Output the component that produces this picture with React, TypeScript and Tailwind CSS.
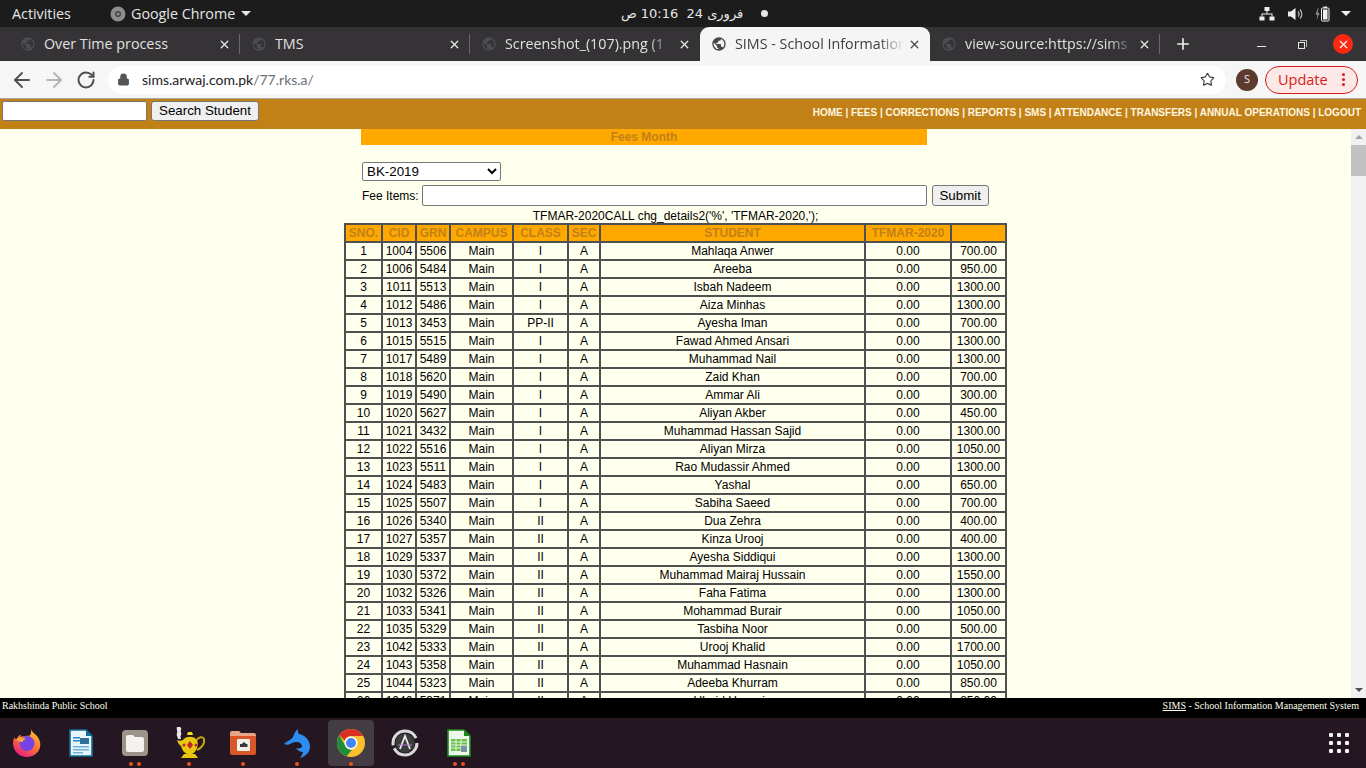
import { ArrowLeft, ArrowRight, RotateCw, Star, Plus, X, Lock } from "lucide-react";
import { MdPublic } from "react-icons/md";

const rows: [number, number, number, string, string, string, string][] = [
  [1, 1004, 5506, "I", "A", "Mahlaqa Anwer", "700.00"],
  [2, 1006, 5484, "I", "A", "Areeba", "950.00"],
  [3, 1011, 5513, "I", "A", "Isbah Nadeem", "1300.00"],
  [4, 1012, 5486, "I", "A", "Aiza Minhas", "1300.00"],
  [5, 1013, 3453, "PP-II", "A", "Ayesha Iman", "700.00"],
  [6, 1015, 5515, "I", "A", "Fawad Ahmed Ansari", "1300.00"],
  [7, 1017, 5489, "I", "A", "Muhammad Nail", "1300.00"],
  [8, 1018, 5620, "I", "A", "Zaid Khan", "700.00"],
  [9, 1019, 5490, "I", "A", "Ammar Ali", "300.00"],
  [10, 1020, 5627, "I", "A", "Aliyan Akber", "450.00"],
  [11, 1021, 3432, "I", "A", "Muhammad Hassan Sajid", "1300.00"],
  [12, 1022, 5516, "I", "A", "Aliyan Mirza", "1050.00"],
  [13, 1023, 5511, "I", "A", "Rao Mudassir Ahmed", "1300.00"],
  [14, 1024, 5483, "I", "A", "Yashal", "650.00"],
  [15, 1025, 5507, "I", "A", "Sabiha Saeed", "700.00"],
  [16, 1026, 5340, "II", "A", "Dua Zehra", "400.00"],
  [17, 1027, 5357, "II", "A", "Kinza Urooj", "400.00"],
  [18, 1029, 5337, "II", "A", "Ayesha Siddiqui", "1300.00"],
  [19, 1030, 5372, "II", "A", "Muhammad Mairaj Hussain", "1550.00"],
  [20, 1032, 5326, "II", "A", "Faha Fatima", "1300.00"],
  [21, 1033, 5341, "II", "A", "Mohammad Burair", "1050.00"],
  [22, 1035, 5329, "II", "A", "Tasbiha Noor", "500.00"],
  [23, 1042, 5333, "II", "A", "Urooj Khalid", "1700.00"],
  [24, 1043, 5358, "II", "A", "Muhammad Hasnain", "1050.00"],
  [25, 1044, 5323, "II", "A", "Adeeba Khurram", "850.00"],
  [26, 1046, 5371, "II", "A", "Ubaid Hussain", "850.00"],
];

const tabs = [
  { title: "Over Time process", fade: false },
  { title: "TMS", fade: false },
  { title: "Screenshot_(107).png (1", fade: true },
  { title: "SIMS - School Information", fade: true, active: true },
  { title: "view-source:https://sims", fade: true },
];

const navLinks = ["HOME", "FEES", "CORRECTIONS", "REPORTS", "SMS", "ATTENDANCE", "TRANSFERS", "ANNUAL OPERATIONS", "LOGOUT"];

const headers = ["SNO.", "CID", "GRN", "CAMPUS", "CLASS", "SEC", "STUDENT", "TFMAR-2020", ""];
const colWidths = ["w-[37px]", "w-[34px]", "w-[34px]", "w-[63px]", "w-[55px]", "w-[32px]", "w-[265px]", "w-[86px]", "w-[55px]"];

function TopBar() {
  return (
    <div className="h-[27px] bg-[#1c1c1c] flex items-center text-[#e6e6e6] text-[14.3px] font-['Open_Sans',sans-serif] shrink-0">
      <span className="ml-3 w-[98px]">Activities</span>
      <svg width="16" height="16" viewBox="0 0 16 16">
        <circle cx="8" cy="8" r="7.5" fill="#8c8c8c" />
        <circle cx="8" cy="8" r="3" fill="#444" />
        <circle cx="8" cy="8" r="1.6" fill="#8c8c8c" />
      </svg>
      <span className="ml-[5px]">Google Chrome</span>
      <span className="ml-[6px] w-0 h-0 border-x-[5px] border-x-transparent border-t-[5px] border-t-[#e6e6e6]" />
      <div className="flex-1 flex justify-center items-center pr-[121px] font-['DejaVu_Sans',sans-serif] text-[13px]">
        <span dir="rtl" className="whitespace-pre">فروری 24  10:16 ص</span>
        <span className="ml-[18px] w-[7px] h-[7px] rounded-full bg-[#e6e6e6]" />
      </div>
      <div className="flex items-center mr-[15px]">
        <svg width="16" height="14" viewBox="0 0 16 14" fill="#eee">
          <rect x="5.5" y="0" width="5" height="4" />
          <rect x="0.5" y="9.5" width="5" height="4" />
          <rect x="10.5" y="9.5" width="5" height="4" />
          <path d="M7.5 4h1v2.5H13.5V9.5h-1V7.5h-9V9.5h-1V6.5H7.5z" />
        </svg>
        <svg className="ml-[13px]" width="16" height="14" viewBox="0 0 16 14" fill="none">
          <path d="M0 4.5h3L7.5 1v12L3 9.500H0z" fill="#eee" />
          <path d="M10 4.500a3.500 3.500 0 0 1 0 5M12 2.500a6.500 6.500 0 0 1 0 9" stroke="#bbb" strokeWidth="1.200" />
        </svg>
        <svg className="ml-[11px]" width="15" height="16" viewBox="0 0 15 16" fill="none">
          <path d="M3 2 0.500 8.500H2.500L1.500 14 4.500 7H2.500L3.500 2z" fill="#999" />
          <rect x="6.500" y="2" width="7.500" height="13" rx="1" stroke="#eee" />
          <rect x="8" y="3.500" width="4.500" height="10" fill="#eee" />
          <rect x="8.500" y="0.500" width="3.500" height="1.500" fill="#eee" />
        </svg>
        <span className="ml-[11px] w-0 h-0 border-x-[5px] border-x-transparent border-t-[5px] border-t-[#eee]" />
      </div>
    </div>
  );
}

function TabStrip() {
  return (
    <div className="h-[34px] bg-[#353336] flex items-stretch pl-[9px] shrink-0 font-['Open_Sans',sans-serif] text-[14.3px]">
      {tabs.map((tab, i) => (
        <div
          key={tab.title}
          className={
            tab.active
              ? "w-[230px] flex items-center bg-[#f5f5f5] rounded-t-[9px] text-[#3c4043] pl-[11px] pr-[9px]"
              : i === 0
                ? "w-[231px] flex items-center text-[#e0e0e0] pl-[11px] pr-[9px] relative"
                : "w-[230px] flex items-center text-[#e0e0e0] pl-[11px] pr-[9px] relative"
          }
        >
          <MdPublic size={16} color={tab.active ? "#45474a" : "#4d4c4f"} className="shrink-0" />
          <span
            className={
              tab.fade
                ? "ml-[8px] flex-1 overflow-hidden whitespace-nowrap [mask-image:linear-gradient(to_right,black_85%,transparent)]"
                : "ml-[8px] flex-1 overflow-hidden whitespace-nowrap"
            }
          >
            {tab.title}
          </span>
          <X size={13} strokeWidth={2.400} color={tab.active ? "#45474a" : "#e8e8e8"} className="shrink-0 ml-[4px]" />
          {!tab.active && i !== 2 && <span className="absolute right-0 top-[7px] h-[20px] w-px bg-[#6a686b]" />}
        </div>
      ))}
      <div className="w-[46px] flex items-center justify-center">
        <Plus size={18} strokeWidth={2.200} color="#eee" />
      </div>
      <div className="flex-1 flex items-center justify-end pr-[13px]">
        <span className="w-[9px] h-px bg-[#e6e6e6] mr-[32px] mt-[5px]" />
        <span className="relative w-[7px] h-[7px] border border-[#e6e6e6] mr-[28px] mt-[2px]">
          <span className="absolute -top-[3px] -right-[3px] w-[7px] h-[7px] border-t border-r border-[#bbb]" />
        </span>
        <span className="w-[20px] h-[20px] rounded-full bg-[#fa2a10] flex items-center justify-center">
          <X size={13} strokeWidth={2} color="#fff" />
        </span>
      </div>
    </div>
  );
}

function Toolbar() {
  return (
    <div className="h-[37px] bg-[#f6f6f6] flex items-center shrink-0 font-['Open_Sans',sans-serif]">
      <div className="w-[108px] flex items-center pl-[10px] gap-[8px]">
        <ArrowLeft size={24} strokeWidth={1.900} color="#505050" />
        <ArrowRight size={24} strokeWidth={1.800} color="#b4b4b4" />
        <RotateCw size={20} strokeWidth={2.400} color="#505050" className="ml-[2px]" />
      </div>
      <div className="w-[1118px] h-[28px] bg-white rounded-full flex items-center pl-[9px] pr-[11px]">
        <Lock size={13} fill="#555" color="#555" strokeWidth={2} />
        <span className="ml-[12px] text-[14px] flex-1 text-[#202124] font-['Lato',sans-serif]">
          sims.arwaj.com.pk<span className="text-[#6a7178]">/77.rks.a/</span>
        </span>
        <Star size={15} strokeWidth={1.900} color="#444" />
      </div>
      <span className="ml-[10px] w-[22px] h-[22px] rounded-full bg-[#5d3a30] text-[#f2e8e4] text-[11px] flex items-center justify-center">
        S
      </span>
      <div className="ml-[7px] w-[93px] h-[28px] rounded-full border border-[#d81a1a] bg-[#fde8e8] text-[#d81a1a] text-[14.500px] flex items-center pl-[12px]">
        Update
        <span className="ml-[14px] flex flex-col gap-[2px]">
          <span className="w-[3px] h-[3px] rounded-full bg-[#d81a1a]" />
          <span className="w-[3px] h-[3px] rounded-full bg-[#d81a1a]" />
          <span className="w-[3px] h-[3px] rounded-full bg-[#d81a1a]" />
        </span>
      </div>
    </div>
  );
}

function PageHeader() {
  return (
    <div className="h-[31px] bg-[#c28117] border-t border-[#a9a9a9] flex items-center pl-[2px] pr-[5px] pb-[6px] shrink-0 font-['Liberation_Sans',sans-serif]">
      <input className="w-[145px] h-[20px] bg-white border border-[#767676] rounded-[2px]" />
      <button className="ml-[4px] w-[108px] h-[20px] bg-[#efefef] border border-[#767676] rounded-[3px] text-[13.333px] text-black leading-none">
        Search Student
      </button>
      <div className="ml-auto mt-[2px] text-[10px] font-bold text-[#fff7e0] whitespace-pre">{navLinks.join(" | ")}</div>
    </div>
  );
}

function FeesTable() {
  return (
    <table className="ml-[344px] w-[661px] table-fixed border-collapse border-2 border-[#505050] text-[12px] text-center text-black">
      <thead>
        <tr className="bg-[#ffa800]">
          {headers.map((h, i) => (
            <th key={i} className={`${colWidths[i]} h-[18px] p-0 border-2 border-[#505050] font-bold text-[#c28117] leading-none`}>
              {h}
            </th>
          ))}
        </tr>
      </thead>
      <tbody>
        {rows.map((r) => (
          <tr key={r[0]}>
            <td className="h-[18px] p-0 border-2 border-[#505050] leading-none">{r[0]}</td>
            <td className="p-0 border-2 border-[#505050] leading-none">{r[1]}</td>
            <td className="p-0 border-2 border-[#505050] leading-none">{r[2]}</td>
            <td className="p-0 border-2 border-[#505050] leading-none">Main</td>
            <td className="p-0 border-2 border-[#505050] leading-none">{r[3]}</td>
            <td className="p-0 border-2 border-[#505050] leading-none">{r[4]}</td>
            <td className="p-0 border-2 border-[#505050] leading-none">{r[5]}</td>
            <td className="p-0 border-2 border-[#505050] leading-none">0.00</td>
            <td className="p-0 border-2 border-[#505050] leading-none">{r[6]}</td>
          </tr>
        ))}
      </tbody>
    </table>
  );
}

function Scrollbar() {
  return (
    <div className="w-[15px] bg-[#f1f1f1] flex flex-col items-center shrink-0">
      <span className="mt-[6px] w-0 h-0 border-x-[4px] border-x-transparent border-b-[4px] border-b-[#a3a3a3]" />
      <span className="mt-[6px] w-full h-[31px] bg-[#c1c1c1]" />
      <span className="mt-auto mb-[6px] w-0 h-0 border-x-[4px] border-x-transparent border-t-[4px] border-t-[#505050]" />
    </div>
  );
}

function Content() {
  return (
    <div className="flex-1 min-h-0 flex bg-[#ffffee] font-['Liberation_Sans',sans-serif]">
      <div className="flex-1 min-w-0 overflow-hidden">
        <div className="ml-[361px] w-[566px] h-[16px] bg-[#ffa800] text-center text-[12px] font-bold text-[#c28117] leading-[16px]">
          Fees Month
        </div>
        <select className="ml-[362px] mt-[17px] block w-[139px] h-[19px] bg-white border border-[#767676] rounded-[2px] text-[13.333px] text-black">
          <option>BK-2019</option>
        </select>
        <div className="ml-[362px] mt-[4px] h-[21px] flex items-center text-[12px] text-black">
          <span>Fee Items:</span>
          <input className="ml-[3px] w-[505px] h-[21px] bg-white border border-[#767676] rounded-[2px]" />
          <button className="ml-[5px] w-[57px] h-[21px] bg-[#efefef] border border-[#767676] rounded-[3px] text-[13.333px]">
            Submit
          </button>
        </div>
        <div className="mt-[3px] h-[14px] text-center text-[12px] leading-[14px] text-black">
          TFMAR-2020CALL chg_details2('%', 'TFMAR-2020,');
        </div>
        <FeesTable />
      </div>
      <Scrollbar />
    </div>
  );
}

function PageFooter() {
  return (
    <div className="h-[20px] bg-black text-[#ffffee] text-[10px] font-['Liberation_Serif',serif] flex items-center justify-between px-[2px] pr-[7px] pb-[5px] shrink-0">
      <span>Rakhshinda Public School</span>
      <span>
        <span className="underline">SIMS</span> - School Information Management System
      </span>
    </div>
  );
}

function Firefox() {
  return (
    <svg width="30" height="30" viewBox="0 0 30 30">
      <defs>
        <linearGradient id="ff" x1="0.800" y1="0" x2="0.200" y2="1">
          <stop offset="0" stopColor="#ffc22e" />
          <stop offset="0.500" stopColor="#ff7139" />
          <stop offset="1" stopColor="#e31587" />
        </linearGradient>
      </defs>
      <path d="M19 1c1 3 3 4 5 6 4 4 5 9 4 12-1 6-7 10-13 10C7 29 1 23 1 15c0-2 .5-4 1.500-6 .5 1.500 1 2 2 2.500C5.500 9 7 7 9 6.500c-.5 1-.5 2-.3 2.500C11 7.500 15 8 18 7.500 19 5.500 19.500 3 19 1z" fill="url(#ff)" />
      <circle cx="15" cy="15.500" r="7.500" fill="#7542e5" />
      <path d="M4 11c4-2 7-2 10 0-2 .5-3 1.500-3.500 3C8 14.500 6 13 4 11z" fill="#ffa436" />
    </svg>
  );
}

function Writer() {
  return (
    <svg width="24" height="28" viewBox="0 0 24 28">
      <path d="M1 1h16l6 6v20H1z" fill="#eaf4fb" stroke="#0f6e9f" strokeWidth="1.600" />
      <path d="M17 1l6 6h-6z" fill="#0f6e9f" />
      <rect x="4" y="8" width="7" height="1.500" fill="#2a88c2" />
      <rect x="4" y="11" width="7" height="1.500" fill="#2a88c2" />
      <rect x="11" y="9" width="9" height="6" fill="#2f6f98" />
      <rect x="4" y="17" width="16" height="1.500" fill="#6fb3dc" />
      <rect x="4" y="20" width="16" height="1.500" fill="#6fb3dc" />
      <rect x="4" y="23" width="10" height="1.500" fill="#6fb3dc" />
    </svg>
  );
}

function Files() {
  return (
    <svg width="28" height="28" viewBox="0 0 28 28">
      <rect x="1" y="1" width="26" height="26" rx="4" fill="#9b9589" />
      <path d="M5 8a2 2 0 0 1 2-2h5l2 2h7a2 2 0 0 1 2 2v11a2 2 0 0 1-2 2H7a2 2 0 0 1-2-2z" fill="#f4f2ee" />
    </svg>
  );
}

function Lamp() {
  return (
    <svg width="31" height="32" viewBox="0 0 31 32">
      <path d="M3 0c3-1 5 1 4 3-1 2 1 3 0 5-1 2 0 3 0 4H4c0-2-2-3-1-6 1-1-1-4 0-6z" fill="#e8e8e8" />
      <path d="M14 5h4l1 3h-6z" fill="#f3da2b" />
      <path d="M3 13c3 1 5 1 7-1 3-3 10-3 13 1 2 4 0 12-5 14h-5c-4-2-5-5-6-8-2-1-3-3-4-6z" fill="#e8c80e" />
      <path d="M23 13c1-3 6-4 7-1 1 4-2 9-7 11" fill="none" stroke="#c9a90a" strokeWidth="2" />
      <path d="M10 27h11l3 4H7z" fill="#e8c80e" />
      <path d="M16 14l3 4-3 4-3-4z" fill="#c3232d" />
      <circle cx="10" cy="18" r="1.500" fill="#c3232d" />
      <circle cx="22" cy="18" r="1.500" fill="#c3232d" />
    </svg>
  );
}

function CameraFolder() {
  return (
    <svg width="28" height="26" viewBox="0 0 28 26">
      <path d="M1 3a2 2 0 0 1 2-2h7l2 2h13a2 2 0 0 1 2 2v4H1z" fill="#e8a58a" />
      <path d="M1 6h26v17a2 2 0 0 1-2 2H3a2 2 0 0 1-2-2z" fill="#d9562b" />
      <rect x="8" y="9" width="13" height="12" rx="1" fill="#f4f0e8" />
      <path d="M11 17v-3h2l1-1.500h2l1 1.500h1.500v3z" fill="#3a3a3a" />
    </svg>
  );
}

function Dolphin() {
  return (
    <svg width="28" height="31" viewBox="0 0 28 31">
      <path d="M1 16C4 13 8 12 10 9 11 6 12 3 15 1c0 2 0 4 1 5 6 1 11 6 11 13 0 5-4 9-10 11 1-2 3-4 3-6-3 0-6-2-7-4 3 1 5 0 6-1 0-3-2-5-6-5-3 0-6 2-8 3z" fill="#2d8cf0" />
    </svg>
  );
}

function Chrome() {
  return (
    <svg width="28" height="28" viewBox="0 0 28 28">
      <circle cx="14" cy="14" r="14" fill="#fbc02d" />
      <path d="M14 0a14 14 0 0 1 12.100 7H14a7 7 0 0 0-6.500 4.500L2.300 6.300A14 14 0 0 1 14 0z" fill="#d93025" />
      <path d="M2.300 6.300l6 10.500a7 7 0 0 0 6.700 4.100L9.500 27.300A14 14 0 0 1 2.300 6.300z" fill="#1e8e3e" />
      <circle cx="14" cy="14" r="6.500" fill="#fff" />
      <circle cx="14" cy="14" r="5" fill="#4285f4" />
    </svg>
  );
}

function Store() {
  return (
    <svg width="28" height="28" viewBox="0 0 28 28" fill="none">
      <circle cx="14" cy="14" r="12" stroke="#d8d8d8" strokeWidth="3" strokeDasharray="32 3 35 5" />
      <circle cx="14" cy="14" r="9.500" fill="#3c3c3c" />
      <path d="M9 20l5-13 5 13" stroke="#e8e8e8" strokeWidth="1.800" />
      <rect x="7" y="15.500" width="14" height="1" fill="#b070d0" />
    </svg>
  );
}

function Calc() {
  return (
    <svg width="24" height="28" viewBox="0 0 24 28">
      <path d="M1 1h16l6 6v20H1z" fill="#eef8ea" stroke="#1d8a1d" strokeWidth="1.600" />
      <path d="M17 1l6 6h-6z" fill="#1d8a1d" />
      <rect x="4" y="10" width="16" height="12" fill="#6cc04a" />
      <path d="M4 13h16M4 16h16M4 19h16M9 10v12M14 10v12" stroke="#fff" strokeWidth="0.800" />
      <rect x="14" y="17" width="6" height="6" fill="#7b8fa8" />
    </svg>
  );
}

const dock = [
  { icon: <Firefox />, dots: 0 },
  { icon: <Writer />, dots: 0 },
  { icon: <Files />, dots: 2 },
  { icon: <Lamp />, dots: 1 },
  { icon: <CameraFolder />, dots: 1 },
  { icon: <Dolphin />, dots: 1 },
  { icon: <Chrome />, dots: 1, active: true },
  { icon: <Store />, dots: 0 },
  { icon: <Calc />, dots: 2 },
];

function Dock() {
  return (
    <div className="h-[50px] bg-[#241722] flex items-stretch shrink-0">
      {dock.map((d, i) => (
        <div key={i} className="w-[54px] flex items-center justify-center relative">
          {d.active && <span className="absolute left-[4px] top-[2px] w-[46px] h-[46px] rounded-[4px] bg-[#443c43]" />}
          <span className="relative flex">{d.icon}</span>
          <span className="absolute bottom-[2px] left-0 right-0 flex justify-center gap-[4px]">
            {Array.from({ length: d.dots }).map((_, j) => (
              <span key={j} className="w-[4px] h-[4px] rounded-full bg-[#e95420]" />
            ))}
          </span>
        </div>
      ))}
      <div className="ml-auto mr-[17px] self-center grid grid-cols-3 gap-[4px]">
        {Array.from({ length: 9 }).map((_, i) => (
          <span key={i} className="w-[4px] h-[4px] rounded-[1px] bg-[#f0f0f0]" />
        ))}
      </div>
    </div>
  );
}

export default function App() {
  return (
    <div className="w-[1366px] h-[768px] flex flex-col overflow-hidden">
      <TopBar />
      <TabStrip />
      <Toolbar />
      <PageHeader />
      <Content />
      <PageFooter />
      <Dock />
    </div>
  );
}
